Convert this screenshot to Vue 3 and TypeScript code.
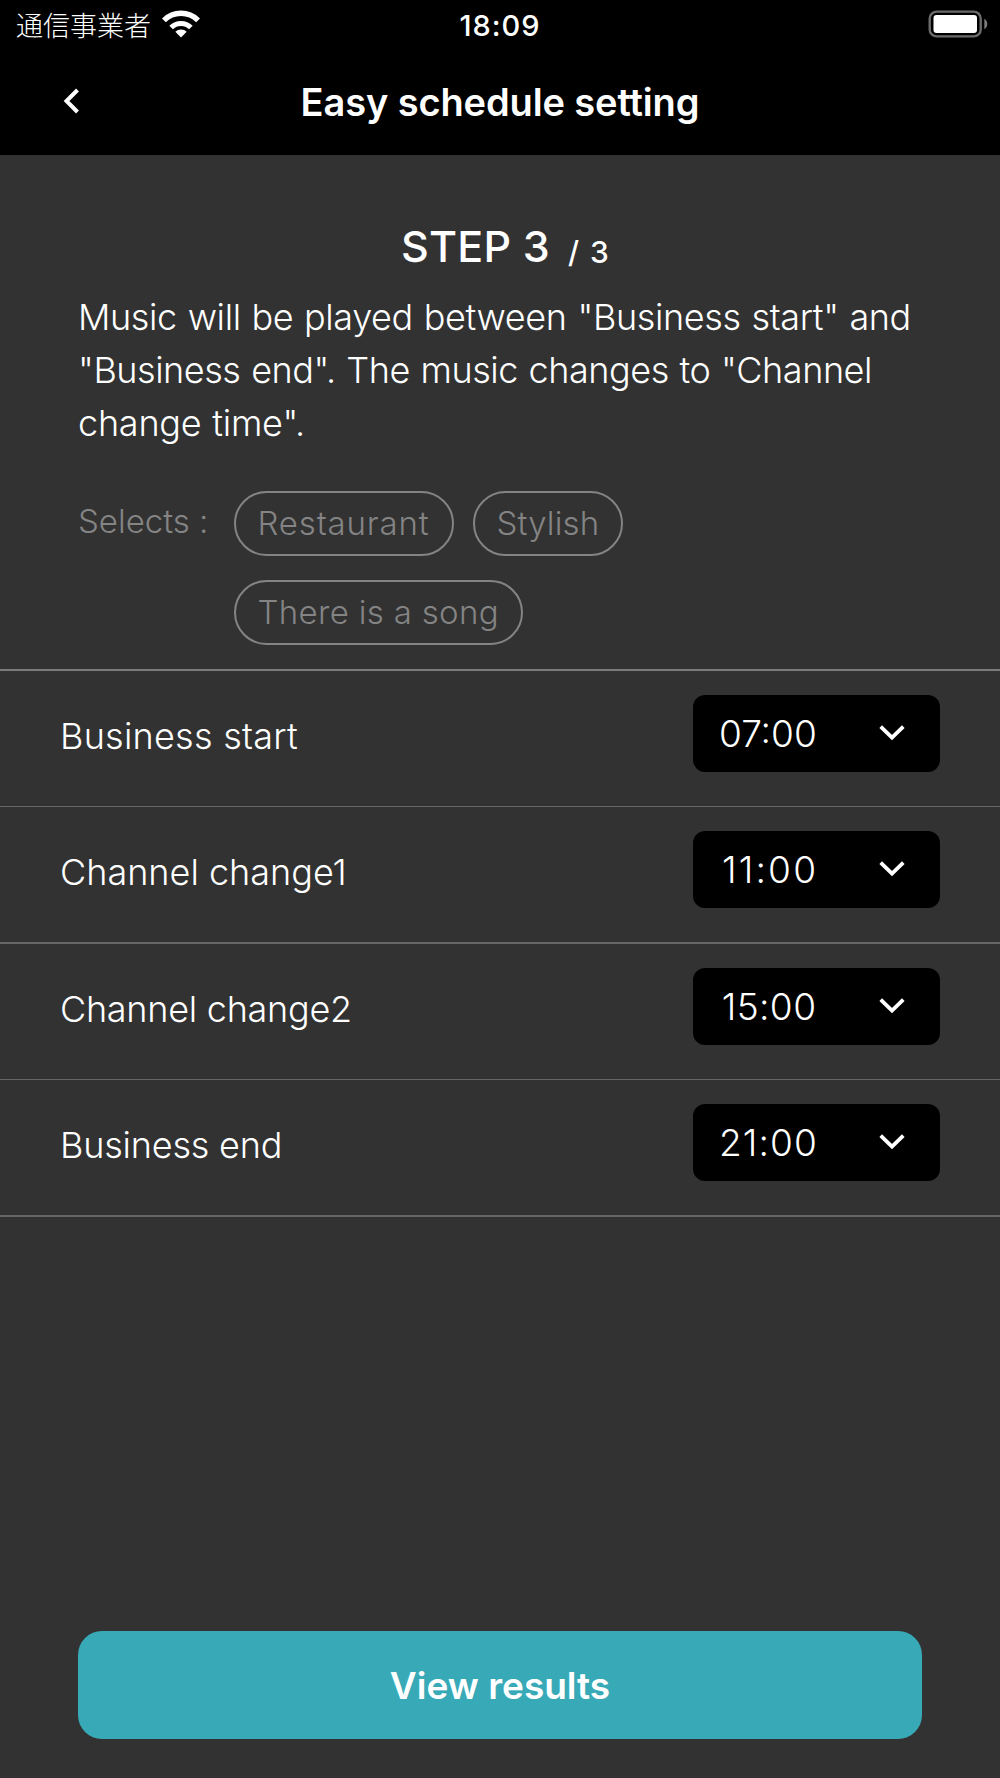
<script setup lang="ts">
import { ref } from 'vue'

interface Phrase {
  text: string
  tracking: number
}

interface Slot extends Phrase {
  time: string
  timeTracking: number
}

const lead: Phrase[] = [
  { text: 'Music will be played between "Business start" and', tracking: -0.37 },
  { text: '"Business end". The music changes to "Channel', tracking: -0.46 },
  { text: 'change time".', tracking: -0.24 },
]

const tags: Phrase[] = [
  { text: 'Restaurant', tracking: 0.85 },
  { text: 'Stylish', tracking: 0.15 },
  { text: 'There is a song', tracking: 0.32 },
]

const slots = ref<Slot[]>([
  { text: 'Business start', tracking: 0.25, time: '07:00', timeTracking: 0 },
  { text: 'Channel change1', tracking: 0, time: '11:00', timeTracking: 2.2 },
  { text: 'Channel change2', tracking: -0.27, time: '15:00', timeTracking: 0.4 },
  { text: 'Business end', tracking: -0.2, time: '21:00', timeTracking: 1.1 },
])
</script>

<template>
  <div class="screen">
    <header class="top">
      <div class="status">
        <div class="carrier">
          <span>通信事業者</span>
          <svg class="wifi" width="38" height="28" viewBox="0 0 38 28" fill="none" stroke="#fff">
            <path d="M1.9 10.4a24.200 24.200 0 0 1 34.200 0" stroke-width="5.500" />
            <path d="M9.100 17.600a14 14 0 0 1 19.800 0" stroke-width="5" />
            <path d="M19 27.500l-5.700-5.700a8 8 0 0 1 11.400 0z" fill="#fff" stroke="none" />
          </svg>
        </div>
        <span class="clock">18:09</span>
        <svg class="battery" width="60" height="28" viewBox="0 0 60 28">
          <rect x="1.700" y="1.600" width="51" height="24.800" rx="7" fill="none" stroke="#6a6a6a" stroke-width="2.400" />
          <rect x="5.500" y="5" width="43.500" height="18" rx="3" fill="#fff" />
          <path d="M56.300 8.800c4 2.200 4 8.200 0 10.400z" fill="#7c7c7c" />
        </svg>
      </div>
      <div class="nav">
        <svg class="back" width="20" height="28" viewBox="0 0 20 28">
          <path d="M15.500 3L4.500 14l11 11" fill="none" stroke="#fff" stroke-width="4" />
        </svg>
        <h1>Easy schedule setting</h1>
      </div>
    </header>

    <section class="intro">
      <h2 class="step">
        <span class="current">STEP 3</span>
        <span class="slash">/</span>
        <span class="total">3</span>
      </h2>
      <p class="lead">
        <span v-for="line in lead" :key="line.text" :style="{ letterSpacing: line.tracking + 'px' }">{{ line.text }}</span>
      </p>
      <div class="selects">
        <span class="caption">Selects :</span>
        <ul class="tags">
          <li v-for="tag in tags" :key="tag.text" :style="{ letterSpacing: tag.tracking + 'px' }">{{ tag.text }}</li>
        </ul>
      </div>
    </section>

    <ul class="slots">
      <li v-for="slot in slots" :key="slot.text">
        <span class="label" :style="{ letterSpacing: slot.tracking + 'px' }">{{ slot.text }}</span>
        <button class="picker" type="button">
          <span class="time">
            <span :style="{ letterSpacing: slot.timeTracking + 'px', marginRight: -slot.timeTracking + 'px' }">{{ slot.time }}</span>
          </span>
          <svg width="26" height="18" viewBox="0 0 26 18">
            <path d="M1.700 2.700L13 13.600 24.300 2.700" fill="none" stroke="#fff" stroke-width="3.800" />
          </svg>
        </button>
      </li>
    </ul>

    <button class="submit" type="button">View results</button>
  </div>
</template>

<style>
body {
  background: #323232;
}
</style>

<style scoped>
.screen {
  display: flex;
  flex-direction: column;
  box-sizing: border-box;
  width: 1000px;
  height: 1778px;
  padding-bottom: 39px;
  background: #323232;
  color: #fff;
  font-family: Inter, 'Noto Sans CJK JP', sans-serif;
  font-weight: 300;
}

h1,
h2,
p,
ul {
  margin: 0;
  padding: 0;
  list-style: none;
}

button {
  border: 0;
  color: inherit;
  font-family: inherit;
}

.top {
  height: 155px;
  background: #000;
}

.status {
  display: grid;
  grid-template-columns: 1fr auto 1fr;
  align-items: center;
  height: 51px;
  padding: 0 12px 0 16px;
}

.carrier {
  display: flex;
  align-items: center;
  gap: 10.500px;
  font: 300 27px/48px 'Noto Sans CJK JP', sans-serif;
}

.carrier span {
  margin-top: -2px;
}

.wifi {
  margin-top: -4px;
}

.clock {
  margin-left: -4px;
  font-size: 29px;
  font-weight: 500;
  letter-spacing: 1px;
  line-height: 51px;
}

.battery {
  justify-self: end;
  margin-top: -3px;
}

.nav {
  display: grid;
  grid-template-columns: 140px 1fr 140px;
  align-items: center;
  height: 103px;
}

.back {
  margin: -4px 0 0 62px;
}

h1 {
  font-size: 38px;
  font-weight: 600;
  letter-spacing: -0.12px;
  line-height: 103px;
  text-align: center;
}

.intro {
  height: 514px;
}

.step {
  display: flex;
  align-items: baseline;
  height: 136px;
  padding-left: 401px;
  font-size: 30px;
  font-weight: 500;
}

.current {
  width: 167px;
  font-size: 43px;
  font-weight: 550;
  letter-spacing: 0.2px;
  line-height: 183px;
}

.slash {
  width: 22px;
  transform: translateY(1px);
}

.total {
  transform: translateY(1px);
}

.lead {
  display: flex;
  flex-direction: column;
  padding-left: 78px;
  font-size: 36px;
  line-height: 53px;
  white-space: nowrap;
  word-spacing: 1px;
}

.selects {
  display: flex;
  margin-top: 41px;
  padding-left: 78px;
  color: #848484;
  font-size: 33px;
}

.caption {
  width: 155.500px;
  line-height: 60px;
}

.tags {
  display: flex;
  flex-wrap: wrap;
  gap: 24px 19px;
  width: 420px;
}

.tags li {
  box-sizing: border-box;
  height: 65px;
  padding: 0 22px;
  border: 2px solid #848484;
  border-radius: 33px;
  line-height: 61px;
}

.slots {
  border-top: 2px solid #7a7b7b;
}

.slots li {
  display: flex;
  justify-content: space-between;
  height: 135px;
  padding: 0 60px;
  border-bottom: 1px solid #666;
}

.slots li:nth-child(even) {
  border-bottom-width: 2px;
}

.label {
  font-size: 36px;
  line-height: 131px;
}

.picker {
  display: flex;
  justify-content: space-between;
  align-items: center;
  width: 247px;
  height: 77px;
  margin-top: 24px;
  padding: 0 35px 2px 26px;
  border-radius: 12px;
  background: #000;
  font-size: 37px;
  font-weight: 300;
}

.time {
  width: 97px;
  padding-top: 2px;
  text-align: right;
}

.submit {
  height: 108px;
  margin: auto 78px 0;
  padding: 0;
  border-radius: 24px;
  background: #38aab7;
  font-size: 37px;
  font-weight: 600;
}
</style>
